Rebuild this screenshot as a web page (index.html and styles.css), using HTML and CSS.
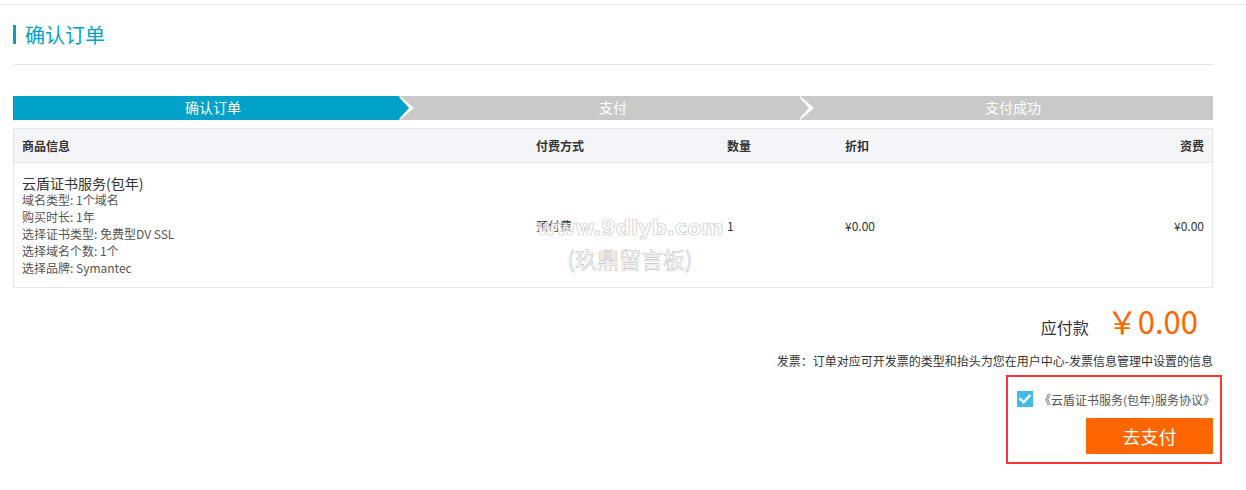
FILE: index.html
```html
<!DOCTYPE html>
<html lang="zh-CN">
<head>
    <meta charset="UTF-8">
    <title>确认订单</title>
    <link rel="stylesheet" href="styles.css">
</head>
<body>
    <div class="topline"></div>

    <div class="page">
        <div class="page-head">
            <h2 class="page-title">确认订单</h2>
        </div>

        <!-- Steps -->
        <div class="steps">
            <div class="step step-active">确认订单</div>
            <div class="step step-arrow">支付</div>
            <div class="step">支付成功</div>
        </div>

        <!-- Order table -->
        <div class="order-table">
            <div class="order-row order-head">
                <div class="cell">商品信息</div>
                <div class="cell">付费方式</div>
                <div class="cell">数量</div>
                <div class="cell">折扣</div>
                <div class="cell cell-right">资费</div>
            </div>
            <div class="order-row order-body">
                <div class="cell product">
                    <div class="product-name">云盾证书服务(包年)</div>
                    <div class="product-spec">域名类型: 1个域名</div>
                    <div class="product-spec">购买时长: 1年</div>
                    <div class="product-spec">选择证书类型: 免费型DV SSL</div>
                    <div class="product-spec">选择域名个数: 1个</div>
                    <div class="product-spec">选择品牌: Symantec</div>
                </div>
                <div class="cell">预付费</div>
                <div class="cell">1</div>
                <div class="cell">¥0.00</div>
                <div class="cell cell-right">¥0.00</div>

                <div class="watermark">www.9dlyb.com<br><span class="watermark-cn">(玖鼎留言板)</span></div>
            </div>
        </div>

        <!-- Summary -->
        <div class="total">
            <span class="total-label">应付款</span>
            <span class="total-price">￥0.00</span>
        </div>
        <p class="invoice">发票：订单对应可开发票的类型和抬头为您在用户中心-发票信息管理中设置的信息</p>

        <div class="pay-box">
            <label class="agree">
                <span class="checkbox">
                    <svg width="16" height="16" viewBox="0 0 16 16">
                        <path d="M3.5 8.2 L6.6 11.2 L12.6 4.8" fill="none" stroke="#fff" stroke-width="2.4" stroke-linecap="square"/>
                    </svg>
                </span>
                <span class="agree-text">《云盾证书服务(包年)服务协议》</span>
            </label>
            <button class="pay-btn">去支付</button>
        </div>
    </div>
</body>
</html>
```

FILE: styles.css
```css
body {
    margin: 0;
    padding: 0;
    font-family: "Microsoft YaHei", "Noto Sans CJK SC", sans-serif;
    font-size: 12px;
    color: #333;
    background: #fff;
}

.topline {
    height: 4px;
    border-bottom: 1px solid #e6e6e6;
}

.page {
    width: 1200px;
    margin-left: 13px;
}

/* Title */
.page-head {
    padding: 20px 0 20px;
    border-bottom: 1px solid #e5e5e5;
}
.page-title {
    margin: 0;
    padding-left: 9px;
    border-left: 3px solid #00a2ca;
    font-size: 20px;
    font-weight: normal;
    line-height: 19px;
    color: #00a2ca;
}

/* Steps */
.steps {
    display: flex;
    margin-top: 31px;
    height: 24px;
}
.step {
    position: relative;
    flex: 1;
    text-align: center;
    line-height: 23px;
    font-size: 14px;
    color: #fff;
    background: #c9c9c9;
}
.step-active {
    background: linear-gradient(to right, #00a2ca calc(100% - 14px), #c9c9c9 0);
}
.step-active::before,
.step-arrow::before {
    content: "";
    position: absolute;
    z-index: 1;
    top: 0;
    left: calc(100% - 13px);
    border-left: 14px solid #fff;
    border-top: 12px solid transparent;
    border-bottom: 12px solid transparent;
}
.step-active::after,
.step-arrow::after {
    content: "";
    position: absolute;
    z-index: 2;
    top: 0;
    left: calc(100% - 15px);
    border-left: 11px solid #c9c9c9;
    border-top: 12px solid transparent;
    border-bottom: 12px solid transparent;
}
.step-active::after {
    border-left-color: #00a2ca;
}

/* Table */
.order-table {
    margin-top: 8px;
    border: 1px solid #e3e6eb;
}
.order-row {
    display: grid;
    grid-template-columns: 514px 191px 118px 1fr 1fr;
    align-items: center;
}
.cell {
    padding: 0 8px;
}
.cell-right {
    text-align: right;
}
.order-head {
    height: 33px;
    background: #f4f5f9;
    border-bottom: 1px solid #e3e6eb;
    font-weight: bold;
}
.order-body {
    position: relative;
}
.product {
    padding-top: 13px;
    padding-bottom: 11px;
}
.product-name {
    font-size: 14px;
    line-height: 15px;
    color: #333;
}
.product-spec {
    line-height: 17px;
    color: #555;
}

/* watermark over the table */
.watermark {
    position: absolute;
    left: 516px;
    top: 50px;
    width: 200px;
    text-align: center;
    font-family: "DejaVu Sans", sans-serif;
    font-weight: bold;
    font-size: 21px;
    line-height: 30px;
    color: rgba(255, 255, 255, 0.7);
    -webkit-text-stroke: 0.7px #c8c8c8;
    pointer-events: none;
}
.watermark-cn {
    font-family: "Noto Sans CJK SC", sans-serif;
    font-weight: normal;
    font-size: 22px;
    -webkit-text-stroke: 0.6px #c4c4c4;
}

/* Summary */
.total {
    display: flex;
    justify-content: flex-end;
    align-items: baseline;
    margin-top: 13px;
    padding-right: 15px;
}
.total-label {
    font-size: 16px;
    color: #333;
    margin-right: 18px;
}
.total-price {
    font-size: 31px;
    line-height: 40px;
    color: #ff6600;
}
.invoice {
    margin: 10px 0 0;
    text-align: right;
    line-height: 20px;
    color: #333;
}

.pay-box {
    display: flex;
    flex-direction: column;
    align-items: flex-end;
    width: 196px;
    margin: 4px -9px 0 auto;
    padding: 14px 7px 8px 9px;
    border: 2px solid #ff3333;
}
.agree {
    display: flex;
    align-items: center;
    align-self: flex-start;
    height: 16px;
}
.checkbox {
    width: 16px;
    height: 16px;
    background: #3fbde6;
}
.checkbox svg {
    display: block;
}
.agree-text {
    margin-left: 6px;
    color: #555;
}
.pay-btn {
    margin-top: 11px;
    width: 127px;
    height: 36px;
    border: none;
    background: #ff6600;
    color: #fff;
    font-family: inherit;
    font-size: 18px;
    cursor: pointer;
}
```
